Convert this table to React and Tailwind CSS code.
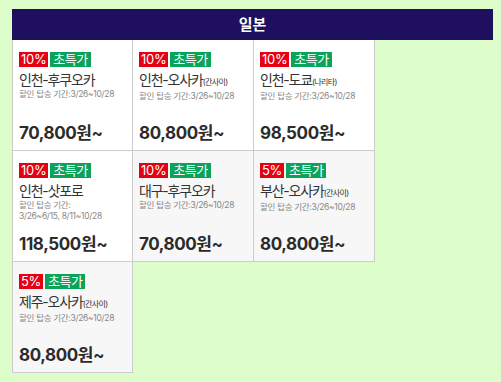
import React from "react";

const items = [
  { p: "10%", t: "인천-후쿠오카", s: "", d: ["할인 탑승 기간:3/26~10/28"], price: "70,800원~", bg: "bg-white" },
  { p: "10%", t: "인천-오사카", s: "(간사이)", d: ["할인 탑승 기간:3/26~10/28"], price: "80,800원~", bg: "bg-white" },
  { p: "10%", t: "인천-도쿄", s: "(나리타)", d: ["할인 탑승 기간:3/26~10/28"], price: "98,500원~", bg: "bg-white" },
  { p: "10%", t: "인천-삿포로", s: "", d: ["할인 탑승 기간:", "3/26~6/15, 8/11~10/28"], price: "118,500원~", bg: "bg-white" },
  { p: "10%", t: "대구-후쿠오카", s: "", d: ["할인 탑승 기간:3/26~10/28"], price: "70,800원~", bg: "bg-[#f7f7f8]" },
  { p: "5%", t: "부산-오사카", s: "(간사이)", d: ["할인 탑승 기간:3/26~10/28"], price: "80,800원~", bg: "bg-[#f7f7f8]" },
  { p: "5%", t: "제주-오사카", s: "(간사이)", d: ["할인 탑승 기간:3/26~10/28"], price: "80,800원~", bg: "bg-[#f7f7f8]" },
];

function Cell({ it, first }) {
  return (
    <div
      className={`${it.bg} ${first ? "border-l" : ""} border-r border-b border-[#cccccc] h-[111px] flex flex-col pl-[6px] pt-[12px]`}
    >
      <div className="flex gap-[2px] h-[15px]">
        <span className="bg-[#e50012] text-white text-[13px] leading-[15px] px-[2px] tracking-[-0.3px]">{it.p}</span>
        <span className="bg-[#0aa35a] text-white text-[13px] leading-[15px] px-[3px] tracking-[-0.5px]">초특가</span>
      </div>
      <div className="mt-[4px] text-[14px] leading-[18px] text-[#333] tracking-[-1.2px] whitespace-nowrap">
        {it.t}
        {it.s && <span className="text-[8px] tracking-[-0.6px]">{it.s}</span>}
      </div>
      <div className="text-[8.5px] leading-[11px] text-[#888] tracking-[-0.3px]">
        {it.d.map((l, i) => (
          <div key={i}>{l}</div>
        ))}
      </div>
      <div className="mt-auto mb-[7px] text-[17px] leading-[20px] font-bold text-[#2b2b2b] tracking-[-0.4px]">
        {it.price}
      </div>
    </div>
  );
}

export default function App() {
  return (
    <div
      className="min-h-[382px] bg-[#ddfdcb] pt-[9px] pl-[12px]"
      style={{ fontFamily: 'Inter, "Noto Sans CJK KR", sans-serif' }}
    >
      <div className="w-[481px] h-[31px] bg-[#1e0f5f] text-white font-bold text-[15px] flex items-center justify-center">
        <span style={{ fontFamily: '"Noto Sans CJK KR", sans-serif' }}>일본</span>
      </div>
      <div className="grid grid-cols-[121px_121px_121px] w-[363px]">
        {items.map((it, i) => (
          <Cell key={i} it={it} first={i % 3 === 0} />
        ))}
      </div>
    </div>
  );
}
